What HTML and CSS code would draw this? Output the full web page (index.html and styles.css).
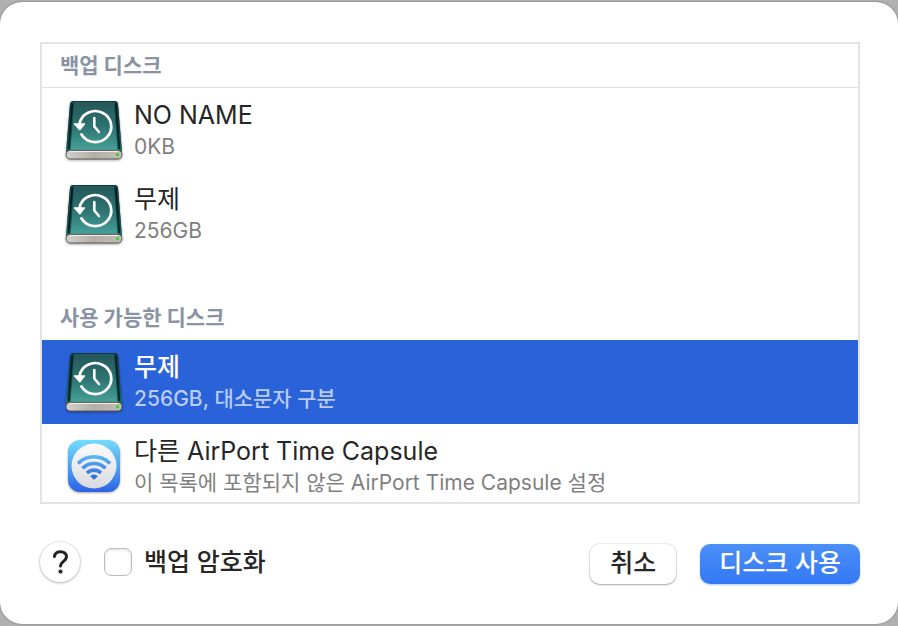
FILE: index.html
```html
<!DOCTYPE html>
<html lang="ko">
<head>
    <meta charset="UTF-8">
    <meta name="viewport" content="width=device-width, initial-scale=1.0">
    <title>디스크 사용</title>
    <link rel="stylesheet" href="styles.css">
</head>
<body>
    <!-- Shared icon drawings -->
    <svg class="defs" aria-hidden="true">
        <defs>
            <linearGradient id="cover" x1="0" y1="0" x2="0" y2="1">
                <stop offset="0" stop-color="#25565a"/>
                <stop offset="0.5" stop-color="#2d7371"/>
                <stop offset="1" stop-color="#48a49a"/>
            </linearGradient>
            <linearGradient id="side" x1="0" y1="0" x2="0" y2="1">
                <stop offset="0" stop-color="#0f3b40"/>
                <stop offset="0.6" stop-color="#104a4a"/>
                <stop offset="1" stop-color="#1c635e"/>
            </linearGradient>
            <linearGradient id="base" x1="0" y1="0" x2="1" y2="0">
                <stop offset="0" stop-color="#d2d0ce"/>
                <stop offset="0.5" stop-color="#b5aea8"/>
                <stop offset="1" stop-color="#c4beb8"/>
            </linearGradient>
            <linearGradient id="sky" x1="0" y1="0" x2="0" y2="1">
                <stop offset="0" stop-color="#72dcfb"/>
                <stop offset="0.55" stop-color="#4a9df6"/>
                <stop offset="1" stop-color="#2c61e6"/>
            </linearGradient>
            <linearGradient id="dial" x1="0" y1="0" x2="0" y2="1">
                <stop offset="0" stop-color="#fcfcfd"/>
                <stop offset="1" stop-color="#d9dade"/>
            </linearGradient>
            <linearGradient id="wave" gradientUnits="userSpaceOnUse" x1="0" y1="16" x2="0" y2="42">
                <stop offset="0" stop-color="#62c4fa"/>
                <stop offset="1" stop-color="#3069dc"/>
            </linearGradient>
            <symbol id="disk" viewBox="0 0 60 64">
                <path d="M6 4 Q6.500 1 9.500 1 H50.500 Q53.500 1 54 4 L58 52 H2 Z" fill="url(#cover)"/>
                <path d="M6 4 Q6.500 1 9.500 1 H10 L6.500 52 H2 Z" fill="url(#side)"/>
                <path d="M54 4 Q53.500 1 50.500 1 H50 L53.500 52 H58 Z" fill="url(#side)"/>
                <path d="M8.300 4 L4.600 49 M51.700 4 L55.400 49" stroke="#01181b" stroke-width="1.400"/>
                <path d="M9.500 1.500 H50.500" stroke="#123b40" stroke-width="1"/>
                <rect x="2" y="50.300" width="56" height="8.700" rx="4.300" fill="url(#base)" stroke="#5c5956"/>
                <path d="M6 51.500 H54" stroke="#eeeceb" stroke-width="1"/>
                <circle cx="53.500" cy="54.800" r="1.800" fill="#43cf36"/>
                <path d="M15.500 24 A16 15.500 0 1 1 17.500 34.500" fill="none" stroke="#fff" stroke-width="2.700" stroke-linecap="round"/>
                <path d="M10.300 23.300 H20.600 Q21.600 23.300 21 24.300 L16.600 30 Q15.800 30.800 15 30 L9.900 24.300 Q9.300 23.300 10.300 23.300 Z" fill="#fff"/>
                <path d="M30.300 18 V26.500 L35 32" fill="none" stroke="#fff" stroke-width="2.600" stroke-linecap="round" stroke-linejoin="round"/>
            </symbol>
            <symbol id="airport" viewBox="0 0 60 64">
                <rect x="4" y="4" width="52" height="52" rx="12" fill="url(#sky)"/>
                <circle cx="30" cy="30" r="22.500" fill="url(#dial)"/>
                <g fill="none" stroke="url(#wave)" stroke-width="3.600">
                    <path d="M14 27.500 A22.500 22.500 0 0 1 46 27.500"/>
                    <path d="M18.500 32.300 A16.300 16.300 0 0 1 41.500 32.300"/>
                    <path d="M23 37 A10 10 0 0 1 37 37"/>
                </g>
                <path d="M26 40 Q30 37 34 40 L31 43 Q30 44 29 43 Z" fill="#346fdb"/>
            </symbol>
        </defs>
    </svg>

    <main class="dialog">
        <div class="disk-list">
            <h2 class="section-title ruled">백업 디스크</h2>
            <ul class="disks">
                <li class="disk">
                    <svg class="disk-icon"><use href="#disk"/></svg>
                    <div>
                        <p class="disk-name">NO NAME</p>
                        <p class="disk-info">0KB</p>
                    </div>
                </li>
                <li class="disk">
                    <svg class="disk-icon"><use href="#disk"/></svg>
                    <div>
                        <p class="disk-name">무제</p>
                        <p class="disk-info">256GB</p>
                    </div>
                </li>
            </ul>
            <h2 class="section-title spaced">사용 가능한 디스크</h2>
            <ul class="disks">
                <li class="disk selected">
                    <svg class="disk-icon"><use href="#disk"/></svg>
                    <div>
                        <p class="disk-name">무제</p>
                        <p class="disk-info">256GB, 대소문자 구분</p>
                    </div>
                </li>
                <li class="disk last">
                    <svg class="disk-icon"><use href="#airport"/></svg>
                    <div>
                        <p class="disk-name">다른 AirPort Time Capsule</p>
                        <p class="disk-info">이 목록에 포함되지 않은 AirPort Time Capsule 설정</p>
                    </div>
                </li>
            </ul>
        </div>

        <div class="footer">
            <button class="help" type="button" aria-label="도움말">
                <svg class="help-icon" viewBox="0 0 20 26">
                    <path d="M4.500 7.500 C5 1 16.500 1 16.500 7.800 C16.500 12.300 10.500 12.500 10.500 17" fill="none" stroke="#222" stroke-width="3" stroke-linecap="round"/>
                    <circle cx="10.500" cy="22.600" r="2.100" fill="#222"/>
                </svg>
            </button>
            <input class="check" type="checkbox" id="encrypt">
            <label class="check-label" for="encrypt">백업 암호화</label>
            <button class="btn" type="button">취소</button>
            <button class="btn primary" type="button">디스크 사용</button>
        </div>
    </main>
</body>
</html>
```
FILE: styles.css
```css
* {
    box-sizing: border-box;
}

body {
    margin: 0;
    padding: 2px 0;
    background: #b0b0b0;
    color: #262626;
    font-family: Inter, "Noto Sans CJK KR", sans-serif;
    font-size: 25px;
}

h2, p, ul {
    margin: 0;
    padding: 0;
}

.defs {
    position: absolute;
    width: 0;
    height: 0;
}

.dialog {
    padding: 40px 38px 40px 40px;
    background: #fff;
    border-radius: 22px;
    box-shadow: 0 0 2px #666;
}

/* Disk list */
.disk-list {
    border: 2px solid #e3e3e3;
}

.section-title {
    padding-left: 18px;
    color: #8a93a3;
    font-size: 21px;
    font-weight: 700;
    line-height: 42px;
}

.ruled {
    padding-top: 1px;
    border-bottom: 1px solid #dedede;
}

.spaced {
    padding-top: 41px;
    padding-bottom: 1px;
}

.disks {
    list-style: none;
}

.disk {
    display: flex;
    gap: 10px;
    height: 84px;
    padding: 12px 22px;
}

.disk.last {
    height: 78px;
    padding-bottom: 6px;
}

.disk-icon {
    flex: none;
    width: 60px;
    height: 64px;
    filter: drop-shadow(0 1px 1px rgba(0, 0, 0, 0.35));
}

.disk-name {
    line-height: 30px;
}

.disk-info {
    color: #808080;
    font-size: 21px;
    line-height: 34px;
}

.selected {
    background: #2962d9;
    color: #fff;
}

.selected .disk-name,
.selected .disk-info {
    font-weight: 500;
}

.selected .disk-info {
    color: #b9ccf3;
}

/* Bottom controls */
.footer {
    display: flex;
    align-items: center;
    height: 44px;
    margin-top: 36px;
}

.help {
    display: flex;
    align-items: center;
    justify-content: center;
    width: 40px;
    height: 40px;
    padding: 0;
    border: none;
    border-radius: 50%;
    background: #fff;
    box-shadow: 0 0 1px 1px rgba(0, 0, 0, 0.07), 0 1px 3px rgba(0, 0, 0, 0.25);
}

.help-icon {
    width: 20px;
    height: 26px;
}

.check {
    appearance: none;
    width: 28px;
    height: 28px;
    margin: 0 12px 0 24px;
    border: 1px solid #bdbdbd;
    border-radius: 7px;
    background: #fff;
    box-shadow: inset 0 1px 3px rgba(0, 0, 0, 0.15);
}

.check-label {
    margin-right: auto;
    font-weight: 500;
    line-height: 40px;
}

.btn {
    align-self: flex-end;
    height: 40px;
    padding: 0 20px 3px;
    border: none;
    border-radius: 10px;
    background: #fff;
    color: #262626;
    font-family: inherit;
    font-size: 25px;
    font-weight: 500;
    line-height: 36px;
    box-shadow: 0 0 1px 1px rgba(0, 0, 0, 0.07), 0 1px 2px rgba(0, 0, 0, 0.3);
}

.primary {
    margin-left: 24px;
    padding: 0 19px 3px;
    background: linear-gradient(#4b8ff8, #3478f6);
    color: #fff;
    box-shadow: 0 1px 2px rgba(52, 120, 246, 0.4);
}
```
